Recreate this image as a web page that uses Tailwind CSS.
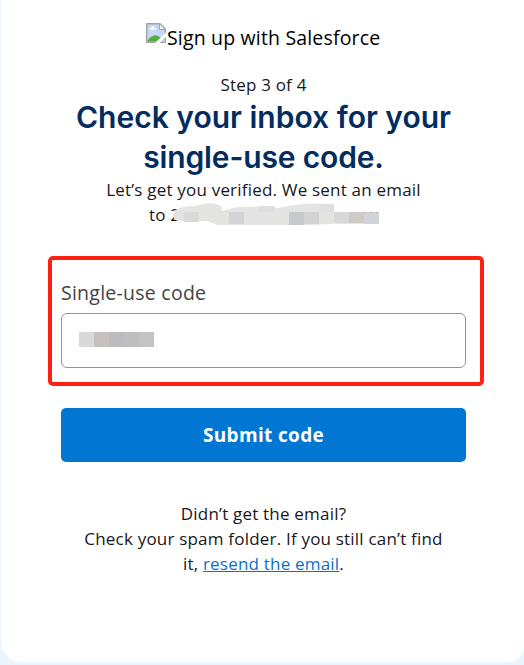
<!DOCTYPE html>
<html lang="en">
<head>
<meta charset="utf-8">
<title>Sign up with Salesforce</title>
<script src="https://cdn.jsdelivr.net/npm/@tailwindcss/browser@4"></script>
</head>
<body class="h-[665px] w-[524px] overflow-hidden bg-[#eaf5fe] font-['Open_Sans',sans-serif] text-[#181818]">
<main class="ml-px flex h-[662px] w-[525px] flex-col rounded-b-[20px] bg-white pt-[23px]">
  <header class="ml-[145px] flex h-[30px] items-start whitespace-nowrap text-black">
    <svg class="h-5 w-5 shrink-0" viewBox="0 0 20 20" aria-hidden="true">
      <path d="M.7.7H14L19.3 6V19.3H.7Z" fill="#c4d9f5" stroke="#a3a3a3" stroke-width="1.4"/>
      <path d="M13.5.8V6.5H19.2Z" fill="#fff" stroke="#a3a3a3"/>
      <path d="M3.5 6.5C3.5 5 5 4.8 5.3 4.8C5.8 2.8 8.8 3 8.8 5.1C10 5.2 10.2 6.5 9.5 6.7H4Z" fill="#fff"/>
      <path d="M1.4 18.6C3 14 8 11.5 12 13L15 15L10.5 18.6Z" fill="#55aa3c"/>
      <path d="M9 20L20 9.5V14L14 20Z" fill="#fff"/>
      <path d="M14 20L20 14V20Z" fill="#a3a3a3"/>
      <path d="M15.8 18.8L18.8 15.8V18.8Z" fill="#c4d9f5"/>
    </svg>
    <span class="ml-px text-[19.5px] leading-[30px] tracking-[0.17px]">Sign up with Salesforce</span>
  </header>
  <section class="mt-[19px] w-[525px] text-center text-[17px] leading-[25px] tracking-[0.2px] whitespace-nowrap">
    <p>Step 3 of 4</p>
    <h1 class="font-['Inter',sans-serif] text-[30px] leading-[40px] font-semibold text-[#032d60]"><span class="tracking-[0px]">Check your inbox for your</span><br><span class="tracking-[-0.15px]">single-use code.</span></h1>
    <p>Let’s get you verified. We sent an email</p>
    <div class="flex h-[25px] pl-[148px]"><span>to 2</span>
      <svg class="relative -left-[9px] mt-[1px] h-[22px] w-[210px]" viewBox="171 203 210 22" aria-hidden="true">
        <path d="M174 211Q180 206 195 206Q215 200 222 207V211L237 207Q270 206 279 208Q300 202 334 204V212H379V224H332L310 225H218L207 221H184Q171 223 174 211Z" fill="#e4e4e3"/>
        <path d="M184 212h15v10h-15z" fill="#d9d9d9"/><path d="M229 212h15v12h-15z" fill="#d3d4d5"/><path d="M259 206h15v6h-15z" fill="#dcdee2"/><path d="M289 212h15v13h-15z" fill="#c8c9cc"/><path d="M304 212h15v12h-15z" fill="#d3d3d3"/><path d="M319 204h15v8h-15z" fill="#e0e0e0"/><path d="M334 212h15v11h-15z" fill="#d8d8d8"/><path d="M349 212h15v11h-15z" fill="#cecbc7"/><path d="M364 212h15v12h-15z" fill="#cfd4da"/><path d="M364 212.5h13" stroke="#aaa" stroke-dasharray="2 4"/>
      </svg>
    </div>
  </section>
  <section class="mt-[29px] ml-[47px] h-[130px] w-[436px] rounded-[5px] border-4 border-[#ff2014] px-[9px] pt-[18px]">
    <label class="block h-[35px] text-[19.5px] leading-[30px] tracking-[0.25px] whitespace-nowrap text-[#444]">Single-use code</label>
    <div class="flex h-[55px] w-[405px] rounded-[6px] border border-[#939393] pt-[18px] pl-[17px]">
      <i class="h-[15px] w-[15px] bg-[#d8dad9]"></i><i class="h-[15px] w-[15px] bg-[#c6c1be]"></i><i class="h-[15px] w-[15px] bg-[#bbbcc0]"></i><i class="h-[15px] w-[15px] bg-[#bebebf]"></i><i class="h-[15px] w-[15px] bg-[#c3c3c6]"></i>
    </div>
  </section>
  <button class="mt-[22px] ml-[60px] h-[54px] w-[405px] shrink-0 rounded-[5px] bg-[#0176d3] text-[19px] font-bold tracking-[0.35px] whitespace-nowrap text-white">Submit code</button>
  <footer class="mt-[39px] w-[525px] text-center text-[17px] leading-[25px] tracking-[0.2px] whitespace-nowrap">
    <p>Didn’t get the email?</p>
    <p>Check your spam folder. If you still can’t find</p>
    <p>it, <a class="text-[#0b6fce] underline" href="#">resend the email</a>.</p>
  </footer>
</main>
</body>
</html>
